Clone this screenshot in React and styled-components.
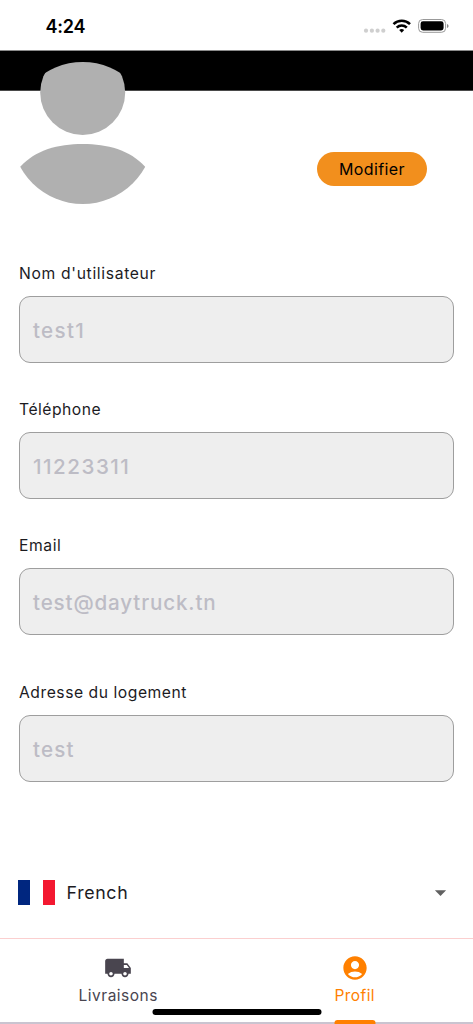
import styled, { createGlobalStyle } from 'styled-components';
import { MdAccountCircle, MdArrowDropDown, MdLocalShipping } from 'react-icons/md';

const GlobalStyle = createGlobalStyle`
  * {
    box-sizing: border-box;
  }

  body {
    margin: 0;
    background-color: #fff;
    font-family: 'Inter', 'Liberation Sans', sans-serif;
    color: #1c1b1f;
  }
`;

const Screen = styled.div`
  display: flex;
  flex-direction: column;
  height: 1024px;
  overflow: hidden;
  background-color: #fff;
`;

const StatusBar = styled.header`
  display: flex;
  justify-content: space-between;
  align-items: flex-start;
  flex: none;
  height: 51px;
  padding: 15px 24px 0 45.5px;
  border-bottom: 1px solid #8a8a8a;
`;

const Time = styled.span`
  font-size: 18px;
  line-height: 23px;
  font-weight: 600;
  letter-spacing: -0.2px;
  color: #000;
`;

const Banner = styled.div`
  flex: none;
  height: 40px;
  background-color: #000;
  border-bottom: 1px solid #4a4a4a;
`;

const ProfileHeader = styled.section`
  display: flex;
  justify-content: space-between;
  align-items: flex-start;
  flex: none;
  height: 173px;
  margin-top: -29px;
  padding: 0 46px 0 12px;
`;

const EditButton = styled.button`
  width: 110px;
  height: 34px;
  margin-top: 90px;
  padding: 0;
  border: none;
  border-radius: 17px;
  background-color: #f28f1d;
  font-family: inherit;
  font-size: 16px;
  font-weight: 400;
  letter-spacing: 0.4px;
  color: #000;
`;

const Form = styled.main`
  display: flex;
  flex-direction: column;
  flex: none;
  padding: 29px 19px 0;
`;

const Field = styled.div`
  display: flex;
  flex-direction: column;
  gap: 12px;
  margin-bottom: ${({ $gap }) => $gap || 37}px;
`;

const Label = styled.label`
  font-size: 15.7px;
  line-height: 20px;
  letter-spacing: ${({ $spacing }) => $spacing}px;
`;

const Value = styled.div`
  display: flex;
  align-items: center;
  height: 67px;
  padding: 1px 13px 0;
  border: 1px solid #9e9e9e;
  border-radius: 11px;
  background-color: #eee;
  font-size: 20.6px;
  font-weight: 500;
  letter-spacing: ${({ $spacing }) => $spacing}px;
  color: #bdbcc5;
`;

const Language = styled.div`
  display: flex;
  align-items: center;
  flex: none;
  height: 25px;
  margin: 97px 19px 0 18px;
`;

const Flag = styled.span`
  display: flex;
  justify-content: space-between;
  width: 37px;
  height: 25px;
  margin-right: 11.5px;
`;

const Stripe = styled.span`
  width: 12.4px;
  background-color: ${({ $color }) => $color};
`;

const LanguageName = styled.span`
  flex: 1;
  font-size: 17.8px;
  letter-spacing: 0.65px;
`;

const TabBar = styled.nav`
  display: flex;
  position: relative;
  flex: none;
  height: 86px;
  margin-top: 33px;
  border-top: 1px solid #fbcfcf;
  border-bottom: 2px solid #cac4d0;
`;

const Tab = styled.div`
  display: flex;
  flex-direction: column;
  align-items: center;
  flex: 1;
  padding-top: 14.5px;
  font-size: 15.5px;
  line-height: 20px;
  letter-spacing: ${({ $active }) => ($active ? 0.4 : 0.5)}px;
  color: ${({ $active }) => ($active ? '#ff8000' : '#49454f')};

  svg {
    margin-bottom: 4px;
  }
`;

const ActiveMark = styled.span`
  position: absolute;
  bottom: -2px;
  left: 75%;
  width: 41px;
  height: 4px;
  border-radius: 3px 3px 0 0;
  background-color: #ff8000;
  transform: translateX(-50%);
`;

const HomeIndicator = styled.span`
  position: absolute;
  bottom: 7px;
  left: 50%;
  width: 169px;
  height: 6px;
  border-radius: 3px;
  background-color: #000;
  transform: translateX(-50%);
`;

const fields = [
  { label: "Nom d'utilisateur", labelSpacing: 0.66, value: 'test1', spacing: 1.3 },
  { label: 'Téléphone', labelSpacing: 0.5, value: '11223311', spacing: 1.5 },
  { label: 'Email', labelSpacing: 0.55, value: 'test@daytruck.tn', gap: 48, spacing: 0.85 },
  { label: 'Adresse du logement', labelSpacing: 0.53, value: 'test', gap: 1, spacing: 1.2 },
];

function StatusIcons() {
  return (
    <svg width="86" height="20" viewBox="363 15 86 20">
      <g fill="#cfcfcf">
        <circle cx="366" cy="30.7" r="2.1" />
        <circle cx="371.9" cy="30.7" r="2.1" />
        <circle cx="377.6" cy="30.7" r="2.1" />
        <circle cx="383.3" cy="30.7" r="2.1" />
      </g>
      <g fill="none" stroke="#000" strokeWidth="2.6">
        <path d="M393.5 24.1A12 12 0 0 1 410 24.1" />
        <path d="M396.7 27.6A7.3 7.3 0 0 1 406.8 27.6" />
      </g>
      <path d="M399.2 30.1Q401.7 27.9 404.2 30.1L401.7 32.7Z" />
      <rect x="418.6" y="19.5" width="27" height="12.8" rx="4" fill="none" stroke="#999" />
      <rect x="420.6" y="21.3" width="23" height="9.2" rx="2.4" />
      <path d="M447 24q1.6.6 1.6 2t-1.6 2z" fill="#888" />
    </svg>
  );
}

function Avatar() {
  return (
    <svg width="142" height="142" viewBox="12.3 62 142 142" fill="#b0b0b0">
      <clipPath id="avatar">
        <circle cx="83" cy="133" r="71" />
      </clipPath>
      <g clipPath="url(#avatar)">
        <circle cx="83" cy="92.5" r="42.5" />
        <path d="M20.5 166.7C36 150 58 144 83 144S130 150 145.5 166.7V204H20.5Z" />
      </g>
    </svg>
  );
}

export default function App() {
  return (
    <>
      <GlobalStyle />
      <Screen>
        <StatusBar>
          <Time>4:24</Time>
          <StatusIcons />
        </StatusBar>
        <Banner />
        <ProfileHeader>
          <Avatar />
          <EditButton>Modifier</EditButton>
        </ProfileHeader>
        <Form>
          {fields.map(({ label, labelSpacing, value, spacing, gap }) => (
            <Field key={label} $gap={gap}>
              <Label $spacing={labelSpacing}>{label}</Label>
              <Value $spacing={spacing}>{value}</Value>
            </Field>
          ))}
        </Form>
        <Language>
          <Flag>
            <Stripe $color="#00267f" />
            <Stripe $color="#f31830" />
          </Flag>
          <LanguageName>French</LanguageName>
          <MdArrowDropDown size={27} color="#616161" />
        </Language>
        <TabBar>
          <Tab>
            <MdLocalShipping size={28} />
            Livraisons
          </Tab>
          <Tab $active>
            <MdAccountCircle size={28} />
            Profil
          </Tab>
          <ActiveMark />
          <HomeIndicator />
        </TabBar>
      </Screen>
    </>
  );
}
